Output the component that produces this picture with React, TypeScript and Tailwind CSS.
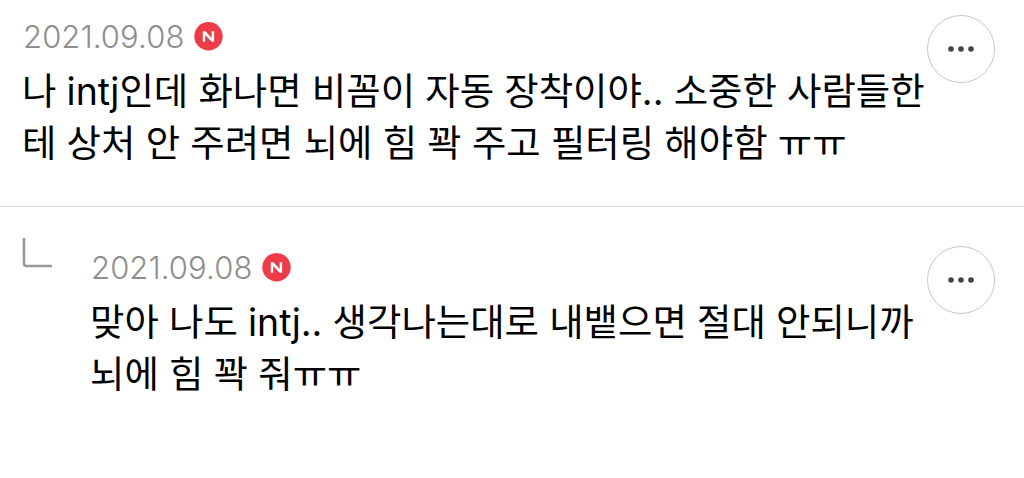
import React from 'react';

interface Comment {
  id: number;
  date: string;
  lines: string[];
  isReply: boolean;
}

const comments: Comment[] = [
  {
    id: 1,
    date: '2021.09.08',
    lines: [
      '나 intj인데 화나면 비꼼이 자동 장착이야.. 소중한 사람들한',
      '테 상처 안 주려면 뇌에 힘 꽉 주고 필터링 해야함 ㅠㅠ',
    ],
    isReply: false,
  },
  {
    id: 2,
    date: '2021.09.08',
    lines: ['맞아 나도 intj.. 생각나는대로 내뱉으면 절대 안되니까', '뇌에 힘 꽉 줘ㅠㅠ'],
    isReply: true,
  },
];

const NewBadge: React.FC = () => (
  <svg className="w-[29px] h-[29px]" viewBox="0 0 29 29" fill="none">
    <circle cx="14.5" cy="14.3" r="14.2" fill="#ee3b48" />
    <path d="M8.8 19.7V9.3H11.4L17.7 15.9V9.3H20.1V19.7H17.6L11.2 13.1V19.7Z" fill="white" />
  </svg>
);

const MoreButton: React.FC = () => (
  <button className="w-[68px] h-[68px] shrink-0 rounded-full border border-[#c8c8c8] flex items-center justify-center">
    <svg className="w-[26px] h-[6px]" viewBox="0 0 26 6" fill="#444444">
      <circle cx="3" cy="3" r="2.8" />
      <circle cx="13" cy="3" r="2.8" />
      <circle cx="23" cy="3" r="2.8" />
    </svg>
  </button>
);

const CommentItem: React.FC<{ comment: Comment }> = ({ comment }) => (
  <li
    className={`flex items-start pr-[29px] ${
      comment.isReply ? 'pl-[22px] pt-[39px]' : 'h-[207px] pl-[22px] pt-[15px] border-b border-[#dcdcdc]'
    }`}
  >
    {comment.isReply && (
      <svg className="w-[30px] h-[30px] mr-[38px] -mt-2 shrink-0" viewBox="0 0 30 30" fill="none">
        <path d="M2 1V25.5Q2 28 4.5 28H29" stroke="#999999" strokeWidth="2.6" strokeLinecap="round" />
      </svg>
    )}
    <div className="flex-1 min-w-0">
      <div className="flex items-center gap-[10px] h-[43px] mb-2 pl-px">
        <span className="text-[31px] leading-none font-light tracking-[0.1px] text-[#8e8e8e]">{comment.date}</span>
        <NewBadge />
      </div>
      {comment.lines.map((line) => (
        <p key={line} className="text-[37.4px] leading-[52px] [word-spacing:-0.3px] whitespace-nowrap text-black">
          {line}
        </p>
      ))}
    </div>
    <MoreButton />
  </li>
);

const App: React.FC = () => (
  <ul className="w-full h-[478px] overflow-hidden bg-white font-[Inter,'Noto_Sans_CJK_KR',sans-serif]">
    {comments.map((comment) => (
      <CommentItem key={comment.id} comment={comment} />
    ))}
  </ul>
);

export default App;
